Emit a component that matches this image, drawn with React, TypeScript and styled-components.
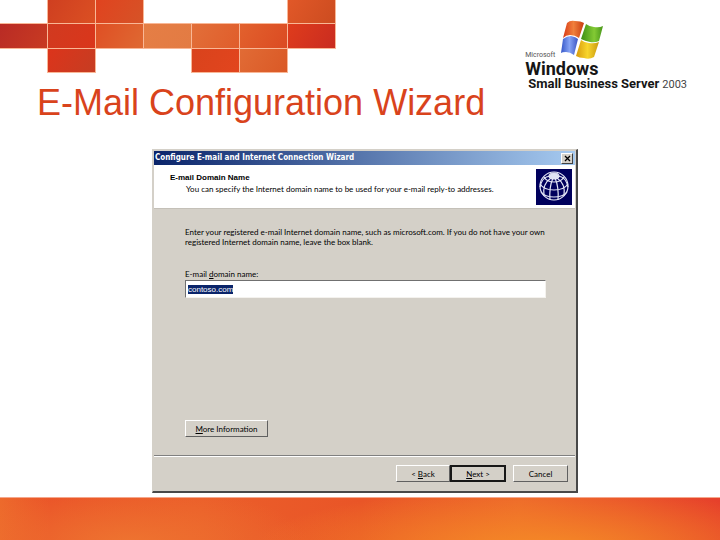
import React from "react";
import styled, { createGlobalStyle } from "styled-components";

const GlobalStyle = createGlobalStyle`
  *, *::before, *::after { box-sizing: border-box; }
  body { margin: 0; background: #fff; font-family: "Liberation Sans", Arial, sans-serif; }
`;

const Slide = styled.main`
  display: flex;
  flex-direction: column;
  min-height: 100vh;
  background: #fff;
`;

const SlideHeader = styled.header`
  display: flex;
  justify-content: space-between;
`;

const Tiles = styled.div`
  display: grid;
  grid-template-columns: repeat(7, 47px);
  grid-template-rows: 23px 24px 23px;
  gap: 1px;
`;

const Tile = styled.span<{ $col: number; $row: number; $from: string; $to: string }>`
  grid-column: ${(p) => p.$col};
  grid-row: ${(p) => p.$row};
  background: linear-gradient(120deg, ${(p) => p.$from}, ${(p) => p.$to});
  box-shadow: 0 0 0 1px #f9b796;
`;

const SlideTitle = styled.h1`
  margin: 10px 0 0 37px;
  color: #d9431c;
  font-size: 36px;
  font-weight: 400;
  line-height: 42px;
  white-space: nowrap;
`;

const Brand = styled.div`
  display: flex;
  flex-direction: column;
  padding: 20px 33px 0 0;
  color: #161616;
  font-family: Roboto, "Liberation Sans", sans-serif;
  white-space: nowrap;
`;

const BrandTop = styled.div`
  display: flex;
  align-items: flex-end;
  height: 40px;
`;

const Maker = styled.span`
  width: 36px;
  color: #555;
  font-size: 7px;
  line-height: 9px;
`;

const Flag = styled.svg`
  width: 46px;
  height: 40px;
`;

const Product = styled.span`
  font-size: 18px;
  font-weight: 700;
  line-height: 17px;
`;

const Edition = styled.span`
  padding-left: 3px;
  font-size: 13px;
  font-weight: 700;
  line-height: 14px;
`;

const Year = styled.span`
  margin-left: 3px;
  color: #444;
  font-size: 11px;
  font-weight: 400;
`;

const Dialog = styled.section`
  display: flex;
  flex: 1;
  flex-direction: column;
  margin: 25px 142px 4px 152px;
  padding: 1px;
  border: 1px solid #d4d0c8;
  border-right: 2px solid #484848;
  border-bottom: 2px solid #484848;
  background: #d4d0c8;
  color: #000;
  font-family: Lato, "Liberation Sans", sans-serif;
  font-size: 8px;
  line-height: 10px;
`;

const TitleBar = styled.div`
  display: flex;
  align-items: center;
  justify-content: space-between;
  height: 14px;
  padding: 0 2px 0 1px;
  background: linear-gradient(90deg, #0a246a, #a6caf0);
`;

const Caption = styled.h2`
  margin: 0;
  color: #fff;
  font-family: "DejaVu Sans Condensed", "DejaVu Sans", sans-serif;
  font-size: 8px;
  font-weight: 700;
  line-height: 12px;
  white-space: nowrap;
`;

const CloseButton = styled.button`
  display: flex;
  align-items: center;
  justify-content: center;
  width: 12px;
  height: 11px;
  padding: 0;
  border: 1px solid;
  border-color: #fff #404040 #404040 #fff;
  background: #d4d0c8;
  color: #000;
`;

const Banner = styled.div`
  display: flex;
  align-items: flex-start;
  justify-content: space-between;
  height: 44px;
  padding: 4px 3px 0 16px;
  border-bottom: 1px solid #c4c0b8;
  background: #fff;
`;

const StepTitle = styled.h3`
  margin: 4px 0 1px;
  font-family: "Liberation Sans", Arial, sans-serif;
  font-size: 8px;
  line-height: 10px;
`;

const StepHint = styled.p`
  margin: 0 0 0 16px;
`;

const Globe = styled.svg`
  flex: none;
  width: 36px;
  height: 36px;
  background: #00005c;
`;

const Body = styled.form`
  display: flex;
  flex: 1;
  flex-direction: column;
`;

const Fields = styled.div`
  display: flex;
  flex: 1;
  flex-direction: column;
  align-items: flex-start;
  padding: 18px 29px 18px 31px;
`;

const Intro = styled.p`
  margin: 0 0 22px;
`;

const DomainInput = styled.input`
  width: 100%;
  height: 18px;
  margin: 1px 0 0;
  padding: 0 2px;
  border: 1px solid;
  border-color: #707070 #f4f2ee #f4f2ee #707070;
  border-radius: 0;
  outline: none;
  background: #fff;
  color: #000;
  font: 8px "Liberation Sans", Arial, sans-serif;

  &::selection { background: #0a246a; color: #fff; }
`;

const PushButton = styled.button<{ $width: number; $primary?: boolean }>`
  width: ${(p) => p.$width}px;
  height: 17px;
  padding: 0;
  border: ${(p) => (p.$primary ? "2px" : "1px")} solid;
  border-color: ${(p) => (p.$primary ? "#181818" : "#fff #606060 #606060 #fff")};
  border-radius: 0;
  background: #d4d0c8;
  color: #000;
  font: 8px Lato, "Liberation Sans", sans-serif;
`;

const InfoRow = styled.div`
  margin-top: auto;
`;

const Actions = styled.div`
  display: flex;
  justify-content: flex-end;
  height: 35px;
  padding: 9px 7px 0;
  border-top: 1px solid #808080;
  box-shadow: inset 0 1px #fff;
`;

const CancelGroup = styled.div`
  margin-left: 7px;
`;

const SlideFooter = styled.footer`
  height: 43px;
  border-top: 1px solid #f5a78c;
  background:
    radial-gradient(ellipse 290px 60px at 75% 120%, #f58a26, transparent),
    radial-gradient(ellipse 180px 60px at 18% 110%, #ee7430, transparent),
    linear-gradient(90deg, #ed6a2c, #ea5228 7%, #eb5e2a 28%, #e95527 50%, #ed672b 72%, #e6402b);
`;

const tiles = [
  { col: 2, row: 1, from: "#cf3f20", to: "#db5023" },
  { col: 3, row: 1, from: "#e0431f", to: "#d65327" },
  { col: 7, row: 1, from: "#e15828", to: "#cc4c20" },
  { col: 1, row: 2, from: "#b92b25", to: "#c83b22" },
  { col: 2, row: 2, from: "#d13a20", to: "#da361b" },
  { col: 3, row: 2, from: "#df4f24", to: "#df6932" },
  { col: 4, row: 2, from: "#e57e45", to: "#e37b43" },
  { col: 5, row: 2, from: "#e26f39", to: "#e05d2b" },
  { col: 6, row: 2, from: "#e2612d", to: "#db4b22" },
  { col: 7, row: 2, from: "#df3c1c", to: "#c92c20" },
  { col: 2, row: 3, from: "#dc341b", to: "#c63d22" },
  { col: 5, row: 3, from: "#d9431c", to: "#e2451e" },
  { col: 6, row: 3, from: "#e16b35", to: "#da5926" },
];

export default function App() {
  const domain = React.useRef<HTMLInputElement>(null);

  React.useEffect(() => {
    domain.current?.focus();
    domain.current?.select();
  }, []);

  return (
    <>
      <GlobalStyle />
      <Slide>
        <SlideHeader>
          <div>
            <Tiles aria-hidden="true">
              {tiles.map((t) => (
                <Tile key={`${t.col}-${t.row}`} $col={t.col} $row={t.row} $from={t.from} $to={t.to} />
              ))}
            </Tiles>
            <SlideTitle>E-Mail Configuration Wizard</SlideTitle>
          </div>
          <Brand>
            <BrandTop>
              <Maker>Microsoft</Maker>
              <Flag viewBox="0 0 46 40" aria-hidden="true">
                <defs>
                  <linearGradient id="red"><stop stopColor="#d93a16" /><stop offset=".5" stopColor="#f0803c" /><stop offset="1" stopColor="#c83c10" /></linearGradient>
                  <linearGradient id="green"><stop stopColor="#3d8f14" /><stop offset=".6" stopColor="#83ca34" /><stop offset="1" stopColor="#48961a" /></linearGradient>
                  <linearGradient id="blue"><stop stopColor="#3456c8" /><stop offset=".5" stopColor="#86a3f4" /><stop offset="1" stopColor="#3c55c4" /></linearGradient>
                  <linearGradient id="yellow"><stop stopColor="#d79a0c" /><stop offset=".5" stopColor="#f8d52c" /><stop offset="1" stopColor="#c99a10" /></linearGradient>
                </defs>
                <path d="M6 3Q9 0 14 1Q20 1 23 3L18 18Q14 15 9 15Q5 15 2 18Z" fill="url(#red)" />
                <path d="M25 4Q29 7 33 7Q38 8 42 6L38 21Q34 23 29 22Q24 21 20 19Z" fill="url(#green)" />
                <path d="M2 19Q6 16 10 16Q15 17 17 19L13 35Q9 32 5 32Q1 32 0 33Z" fill="url(#blue)" />
                <path d="M20 20Q24 23 28 23Q33 24 38 22L33 37Q28 40 23 38Q18 38 15 36Z" fill="url(#yellow)" />
              </Flag>
            </BrandTop>
            <Product>Windows</Product>
            <Edition>
              Small Business Server<Year>2003</Year>
            </Edition>
          </Brand>
        </SlideHeader>

        <Dialog role="dialog" aria-labelledby="caption">
          <TitleBar>
            <Caption id="caption">Configure E-mail and Internet Connection Wizard</Caption>
            <CloseButton type="button" aria-label="Close">
              <svg width="7" height="7" viewBox="0 0 7 7" aria-hidden="true">
                <path d="M1 1L6 6M6 1L1 6" stroke="currentColor" strokeWidth="1.3" />
              </svg>
            </CloseButton>
          </TitleBar>
          <Banner>
            <div>
              <StepTitle>E-mail Domain Name</StepTitle>
              <StepHint>You can specify the Internet domain name to be used for your e-mail reply-to addresses.</StepHint>
            </div>
            <Globe viewBox="0 0 36 36" aria-hidden="true">
              <g fill="none" stroke="#e4e7f6" strokeWidth="1.2">
                <ellipse cx="18" cy="17" rx="14" ry="14" />
                <ellipse cx="18" cy="7" rx="5" ry="3" fill="#dfe3f4" />
                <path d="M8 8Q11 13 18 13T28 8M4 15Q8 21 18 21T32 15M5 23Q9 28 18 28T31 23" />
                <path d="M15 9Q6 15 8 27M17 9Q13 18 14 31M19 9Q23 18 22 31M21 9Q30 15 28 27M14 7Q6 8 4 18M22 7Q30 8 32 18" />
              </g>
            </Globe>
          </Banner>
          <Body onSubmit={(e) => e.preventDefault()}>
            <Fields>
              <Intro>
                Enter your registered e-mail Internet domain name, such as microsoft.com. If you do not have your own
                <br />
                registered Internet domain name, leave the box blank.
              </Intro>
              <label htmlFor="domain">E-mail <u>d</u>omain name:</label>
              <DomainInput id="domain" ref={domain} type="text" defaultValue="contoso.com" />
              <InfoRow>
                <PushButton type="button" $width={83}><u>M</u>ore Information</PushButton>
              </InfoRow>
            </Fields>
            <Actions>
              <PushButton type="button" $width={54}>&lt; <u>B</u>ack</PushButton>
              <PushButton type="submit" $width={56} $primary><u>N</u>ext &gt;</PushButton>
              <CancelGroup>
                <PushButton type="button" $width={55}>Cancel</PushButton>
              </CancelGroup>
            </Actions>
          </Body>
        </Dialog>
        <SlideFooter />
      </Slide>
    </>
  );
}
